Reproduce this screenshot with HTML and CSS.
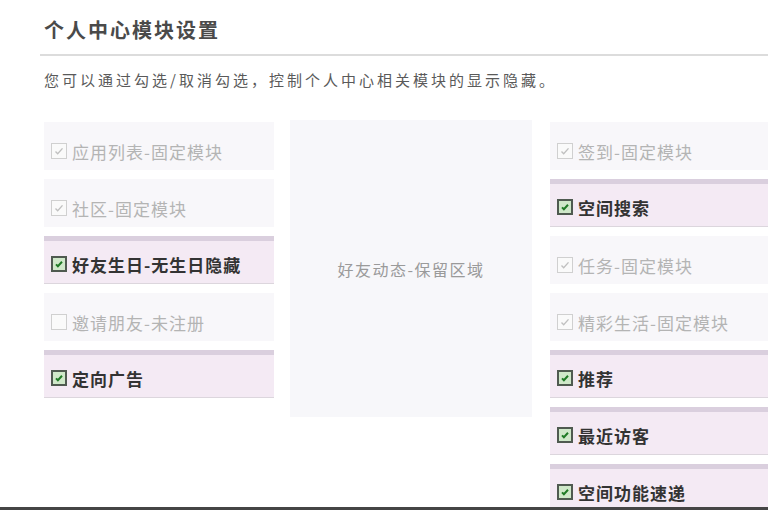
FILE: index.html
```html
<!DOCTYPE html>
<html lang="zh-CN">
<head>
    <meta charset="UTF-8">
    <title>个人中心模块设置</title>
    <link rel="stylesheet" href="styles.css">
</head>
<body>
    <div class="page">
        <div class="head">
            <h1>个人中心模块设置</h1>
        </div>
        <p class="desc">您可以通过勾选/取消勾选，控制个人中心相关模块的显示隐藏。</p>

        <div class="board">
            <div class="col">
                <label class="item fixed"><span class="box"><svg viewBox="0 0 16 16"><path d="M4 8.5l2.5 2.5L12 5"/></svg></span>应用列表-固定模块</label>
                <label class="item fixed"><span class="box"><svg viewBox="0 0 16 16"><path d="M4 8.5l2.5 2.5L12 5"/></svg></span>社区-固定模块</label>
                <label class="item on"><span class="box"><svg viewBox="0 0 16 16"><path d="M4 8.5l2.5 2.5L12 5"/></svg></span>好友生日-无生日隐藏</label>
                <label class="item off"><span class="box"></span>邀请朋友-未注册</label>
                <label class="item on"><span class="box"><svg viewBox="0 0 16 16"><path d="M4 8.5l2.5 2.5L12 5"/></svg></span>定向广告</label>
            </div>

            <div class="feed">好友动态-保留区域</div>

            <div class="col">
                <label class="item fixed"><span class="box"><svg viewBox="0 0 16 16"><path d="M4 8.5l2.5 2.5L12 5"/></svg></span>签到-固定模块</label>
                <label class="item on"><span class="box"><svg viewBox="0 0 16 16"><path d="M4 8.5l2.5 2.5L12 5"/></svg></span>空间搜索</label>
                <label class="item fixed"><span class="box"><svg viewBox="0 0 16 16"><path d="M4 8.5l2.5 2.5L12 5"/></svg></span>任务-固定模块</label>
                <label class="item fixed"><span class="box"><svg viewBox="0 0 16 16"><path d="M4 8.5l2.5 2.5L12 5"/></svg></span>精彩生活-固定模块</label>
                <label class="item on"><span class="box"><svg viewBox="0 0 16 16"><path d="M4 8.5l2.5 2.5L12 5"/></svg></span>推荐</label>
                <label class="item on"><span class="box"><svg viewBox="0 0 16 16"><path d="M4 8.5l2.5 2.5L12 5"/></svg></span>最近访客</label>
                <label class="item on"><span class="box"><svg viewBox="0 0 16 16"><path d="M4 8.5l2.5 2.5L12 5"/></svg></span>空间功能速递</label>
            </div>
        </div>
    </div>
    <div class="bottom-bar"></div>
</body>
</html>
```

FILE: styles.css
```css
* {
    margin: 0;
    padding: 0;
    box-sizing: border-box;
}

body {
    font-family: "Noto Sans CJK SC", "Noto Sans", sans-serif;
    background-color: #fff;
    color: #555;
    overflow: hidden;
}

.page {
    height: 507px;
    overflow: hidden;
    padding-left: 40px;
}

.head {
    padding: 18px 0 12px 4px;
    border-bottom: 2px solid #dcdcdc;
}

.head h1 {
    font-size: 20px;
    line-height: 24px;
    font-weight: bold;
    color: #4a4a4a;
    letter-spacing: 2px;
}

.desc {
    margin: 14px 0 0 4px;
    font-size: 15px;
    line-height: 20px;
    letter-spacing: 3px;
    color: #5a5a5a;
}

.board {
    display: flex;
    align-items: flex-start;
    margin: 32px 0 0 4px;
    width: 800px;
}

.col {
    width: 230px;
    display: flex;
    flex-direction: column;
    gap: 9px;
    flex-shrink: 0;
}

.feed {
    width: 242px;
    height: 297px;
    margin: -2px 18px 0 16px;
    background-color: #f7f7fa;
    display: flex;
    justify-content: center;
    align-items: center;
    font-size: 16px;
    letter-spacing: 1.5px;
    color: #9a9a9a;
    flex-shrink: 0;
}

.item {
    height: 48px;
    display: flex;
    align-items: center;
    padding: 10px 0 0 7px;
    font-size: 17px;
    letter-spacing: 1px;
    background-color: #f8f7fa;
    color: #b4b4b4;
}

.item.on {
    background-color: #f4eaf4;
    border-top: 5px solid #dacfde;
    border-bottom: 1px solid #dcd6dd;
    padding-top: 4px;
    color: #333;
    font-weight: bold;
}

.box {
    width: 16px;
    height: 16px;
    margin-right: 5px;
    border: 1px solid #d0d0d0;
    background-color: #fafafa;
    display: flex;
    flex-shrink: 0;
}

.box svg {
    width: 100%;
    height: 100%;
    fill: none;
    stroke: #c0c0c0;
    stroke-width: 1.6;
}

.on .box {
    border: 2px solid #4f5a50;
    background-color: #cfe8c9;
}

.on .box svg {
    stroke: #1f7a25;
    stroke-width: 2.6;
}

.bottom-bar {
    height: 3px;
    background-color: #454545;
}
```
